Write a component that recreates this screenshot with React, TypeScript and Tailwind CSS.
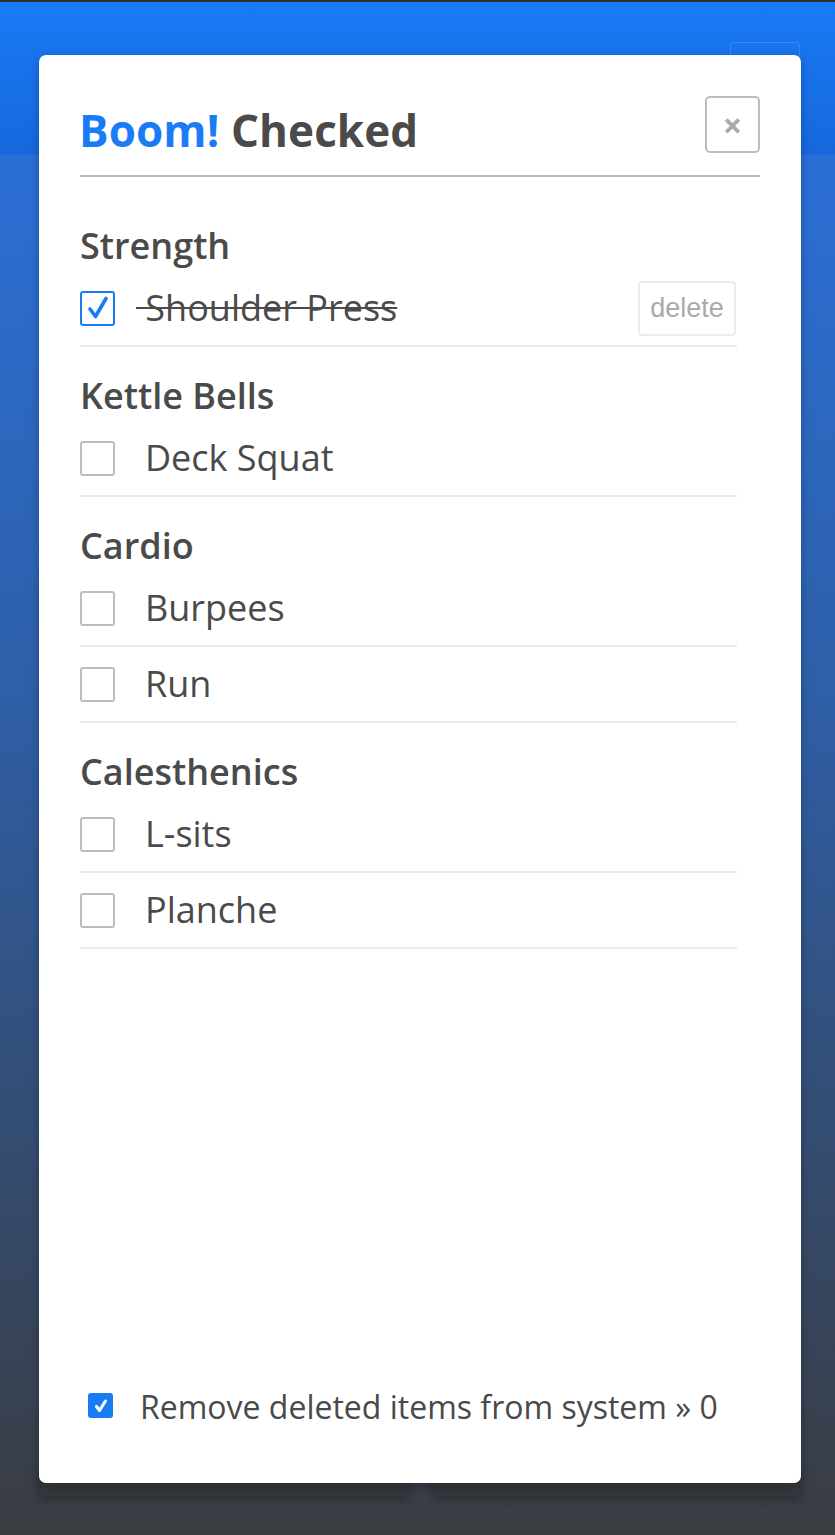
import React from "react";

const sections = [
  { title: "Strength", items: [{ name: "Shoulder Press", done: true }] },
  { title: "Kettle Bells", items: [{ name: "Deck Squat", done: false }] },
  { title: "Cardio", items: [{ name: "Burpees", done: false }, { name: "Run", done: false }] },
  { title: "Calesthenics", items: [{ name: "L-sits", done: false }, { name: "Planche", done: false }] },
];

function Box({ checked }: { checked: boolean }) {
  if (checked) {
    return (
      <div className="w-[35px] h-[35px] shrink-0 rounded-[3px] border-2 border-[#1a7cf5] flex items-center justify-center">
        <svg width="24" height="26" viewBox="0 0 24 26" fill="none">
          <path d="M4 14 L9.5 21.5 L20 3.5" stroke="#1a7cf5" strokeWidth="3.6" strokeLinecap="round" strokeLinejoin="round" />
        </svg>
      </div>
    );
  }
  return <div className="w-[35px] h-[35px] shrink-0 rounded-[3px] border-2 border-[#bdbdbd]" />;
}

export default function App() {
  return (
    <div
      className="relative min-h-[1535px] w-full overflow-hidden"
      style={{ fontFamily: '"Open Sans", "Noto Sans", sans-serif' }}
    >
      {/* background app */}
      <div className="absolute inset-0 bg-[linear-gradient(180deg,#2b6fd6_10%,#2e5fa8_45%,#3a3c41_100%)]" />
      <div className="absolute left-0 right-0 top-0 h-[155px] border-t-2 border-[#2a2d33] bg-[linear-gradient(180deg,#1a7af6_0%,#1668dc_100%)]" />
      <div className="absolute left-[730px] top-[42px] w-[70px] h-[40px] rounded-[4px] border border-[#3c88f0]" />
      <div className="absolute left-[39px] top-[1470px] w-[371px] h-[26px] rounded-b-[6px] bg-[#35373c] shadow-[0_4px_8px_rgba(0,0,0,0.25)]" />
      <div className="absolute left-[432px] top-[1470px] w-[369px] h-[26px] rounded-b-[6px] bg-[#35373c] shadow-[0_4px_8px_rgba(0,0,0,0.25)]" />

      <div className="relative pt-[55px] pl-[39px]">
        <div className="w-[762px] h-[1428px] bg-white rounded-[7px] shadow-[0_3px_10px_rgba(0,0,0,0.25)] flex flex-col px-[41px] pt-[41px]">
          {/* header */}
          <div className="flex items-start justify-between border-b-2 border-[#bbbbbb] h-[81px]">
            <h1 className="text-[44px] font-bold leading-none mt-[12px] ml-[-1px] tracking-[0.1px]">
              <span className="text-[#1a7cf5]">Boom!</span>{" "}
              <span className="text-[#4a4a4a]">Checked</span>
            </h1>
            <button className="w-[55px] h-[57px] rounded-[5px] border-2 border-[#bdbdbd] flex items-center justify-center text-[#aaaaaa] text-[34px] leading-none font-bold">
              ×
            </button>
          </div>

          {/* list */}
          <div className="w-[657px] pt-[20px]">
            {sections.map((s) => (
              <div key={s.title}>
                <div className="h-[74px] flex items-center text-[36px] font-semibold text-[#4a4a4a] leading-none pt-[24px]">
                  {s.title}
                </div>
                {s.items.map((it) => (
                  <div key={it.name} className="h-[76px] flex items-center border-b-2 border-[#ececec] relative">
                    <Box checked={it.done} />
                    {it.done ? (
                      <span className="ml-[21px] text-[36px] text-[#4a4a4a] leading-none line-through decoration-[2px] decoration-[#4a4a4a]">
                        {"\u00a0" + it.name}
                      </span>
                    ) : (
                      <span className="ml-[30px] text-[36px] text-[#4a4a4a] leading-none">{it.name}</span>
                    )}
                    {it.done && (
                      <button
                        className="ml-auto mr-[1px] w-[98px] h-[55px] rounded-[4px] border-2 border-[#ececec] text-[#aaaaaa] text-[27px]"
                        style={{ fontFamily: '"Liberation Sans", Arial, sans-serif' }}
                      >
                        delete
                      </button>
                    )}
                  </div>
                ))}
              </div>
            ))}
          </div>

          <div className="flex-1" />

          {/* footer */}
          <div className="flex items-center pl-[8px] pb-[60px]">
            <div className="w-[25px] h-[25px] rounded-[3px] bg-[#1a7cf5] flex items-center justify-center shrink-0">
              <svg width="16" height="16" viewBox="0 0 16 16" fill="none">
                <path d="M3.5 8.5 L6.5 12.5 L12.5 3" stroke="white" strokeWidth="3" strokeLinecap="round" strokeLinejoin="round" />
              </svg>
            </div>
            <span className="ml-[27px] text-[32px] text-[#4a4a4a] leading-none pt-[3px]">
              Remove deleted items from system » 0
            </span>
          </div>
        </div>
      </div>
    </div>
  );
}
